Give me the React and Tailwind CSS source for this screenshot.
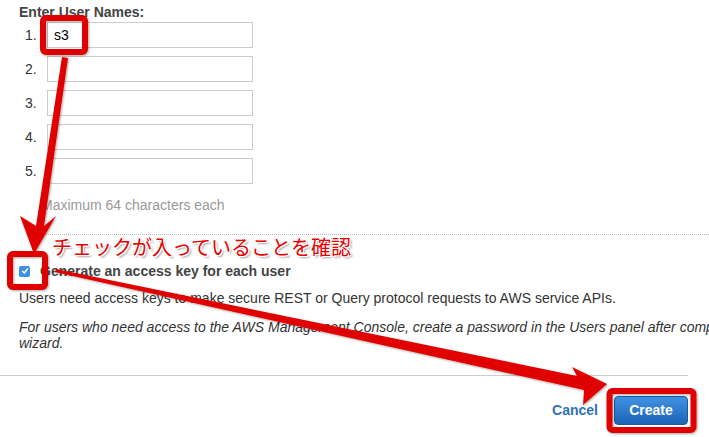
import React from "react";

const names = ["s3", "", "", "", ""];

export default function App() {
  return (
    <div className="relative w-[709px] h-[437px] overflow-hidden bg-white font-['Liberation_Sans',Arial,sans-serif] text-[14px] text-[#333]">
      <div className="pl-[19px] pt-[4px]">
        <div className="font-bold text-[#444] leading-[17px]">Enter User Names:</div>

        <div className="mt-[1px] flex flex-col gap-[8px]">
          {names.map((n, i) => (
            <div key={i} className="flex items-center h-[26px]">
              <span className="w-[28px] pl-[6px] text-[#333] leading-[16px]">{i + 1}.</span>
              <input
                readOnly
                value={n}
                className="w-[206px] h-[26px] border border-[#ccc] bg-white px-[6px] text-[14px] text-black outline-none"
              />
            </div>
          ))}
        </div>

        <div className="mt-[13px] pl-[22px] text-[#999] leading-[16px]">Maximum 64 characters each</div>
      </div>

      <div className="mt-[21px] ml-[40px] border-t border-dotted border-[#bbb]" />

      <div className="pl-[19px]">
        <label className="mt-[28px] flex items-center gap-[10px] h-[16px]">
          <span className="w-[11px] h-[11px] rounded-[2px] bg-[#3d8ee9] flex items-center justify-center">
            <svg width="8" height="8" viewBox="0 0 8 8">
              <path d="M1.5 4.2 L3.3 6 L6.6 1.8" fill="none" stroke="white" strokeWidth="1.4" strokeLinecap="round" strokeLinejoin="round" />
            </svg>
          </span>
          <span className="font-bold text-[#444]">Generate an access key for each user</span>
        </label>

        <p className="mt-[11px] leading-[16px] text-[#333]">
          Users need access keys to make secure REST or Query protocol requests to AWS service APIs.
        </p>
        <p className="mt-[13px] italic leading-[16px] text-[#333] whitespace-nowrap">
          For users who need access to the AWS Management Console, create a password in the Users panel after completing this
          <br />
          wizard.
        </p>
      </div>

      <div className="mt-[24px] w-[688px] border-t border-[#ccc]" />

      <div className="mt-[20px] w-[688px] flex items-center justify-end gap-[16px]">
        <span className="font-bold text-[#2b73b9]">Cancel</span>
        <button className="w-[74px] h-[29px] rounded-[4px] border border-[#1b5aa0] bg-gradient-to-b from-[#4192e2] to-[#1c64b8] text-white font-bold text-[14px]">
          Create
        </button>
      </div>

      {/* annotation overlay */}
      <svg className="absolute left-0 top-0 pointer-events-none" width="709" height="437" viewBox="0 0 709 437">
        <defs>
          <filter id="sh" x="-10%" y="-10%" width="130%" height="130%">
            <feDropShadow dx="1" dy="1" stdDeviation="1" floodColor="#000" floodOpacity="0.35" />
          </filter>
        </defs>
        <g filter="url(#sh)">
          {/* box around first input */}
          <rect x="43" y="18" width="42" height="34" rx="3" fill="none" stroke="#e00000" strokeWidth="6" />
          {/* box around checkbox */}
          <rect x="10" y="254" width="35" height="33" rx="3" fill="none" stroke="#e00000" strokeWidth="6" />
          {/* box around create */}
          <rect x="609.5" y="391" width="84" height="39" rx="3" fill="none" stroke="#e00000" strokeWidth="6" />
          {/* vertical arrow */}
          <polygon points="62,57 68,58 44,226 56,216 34,254 20,216 36,226" fill="#e00000" />
          {/* long arrow */}
          <polygon points="55,272 56,269 577,376 572,367 607,384 583,405 584,390" fill="#e00000" />
        </g>
      </svg>

      <div className="absolute left-[52px] top-[233px] text-[20px] leading-[28px] text-[#e60000] font-['Noto_Sans_CJK_JP',sans-serif] [text-shadow:1px_1px_0_#fff,-1px_-1px_0_#fff,1px_-1px_0_#fff,-1px_1px_0_#fff,2px_2px_2px_rgba(0,0,0,0.4)]">
        チェックが入っていることを確認
      </div>
    </div>
  );
}
